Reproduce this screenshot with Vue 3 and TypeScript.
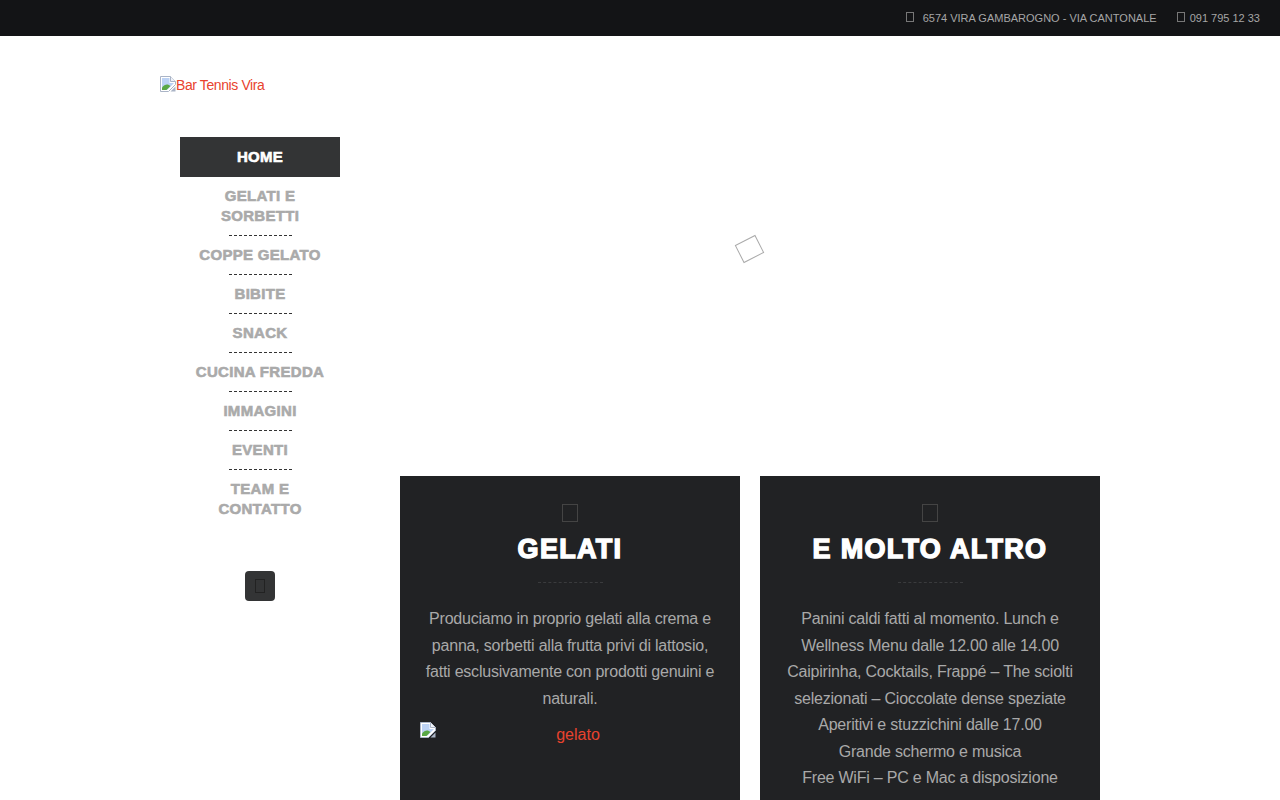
<template>
  <div class="page">
    <header class="topbar">
      <span class="top-item"><i class="tofu tofu-addr"></i>6574 VIRA GAMBAROGNO - VIA CANTONALE</span>
      <span class="top-item"><i class="tofu tofu-phone"></i>091 795 12 33</span>
    </header>

    <div class="layout">
      <aside class="sidebar">
        <a class="logo" href="#">
          <svg class="broken" viewBox="0 0 16 16" width="16" height="16">
            <path d="M.5 .5H10.5L15.5 5.5V8.5L8.5 15.5H.5Z" fill="#fff" stroke="#aab4c6" />
            <path d="M10.5 .5V5.5H15.5" fill="#eef2f8" stroke="#aab4c6" />
            <path d="M2 2H9.5V7H14L7.5 13.5H2Z" fill="#bcd2f4" />
            <path d="M2 14V11.5C4.5 8 8 7.5 10.5 10L6.5 14Z" fill="#5aa845" />
            <path d="M10.5 15.5L15.5 10.5V15.5Z" fill="#aab4c6" />
          </svg>Bar Tennis Vira
        </a>
        <nav class="nav">
          <a class="nav-home" href="#">HOME</a>
          <ul>
            <li v-for="item in menu" :key="item">
              <a href="#">{{ item }}</a>
            </li>
          </ul>
        </nav>
        <button class="to-top" type="button"><i class="tofu tofu-btn"></i></button>
      </aside>

      <main class="main">
        <div class="slider"><div class="loader"></div></div>
        <div class="cards">
          <section class="card">
            <i class="tofu tofu-card"></i>
            <h2>GELATI</h2>
            <div class="rule"></div>
            <p>
              Produciamo in proprio gelati alla crema e<br />
              panna, sorbetti alla frutta privi di lattosio,<br />
              fatti esclusivamente con prodotti genuini e<br />
              naturali.
            </p>
            <a class="card-img" href="#">
              <svg class="broken" viewBox="0 0 16 16" width="16" height="16">
                <path d="M.5 .5H10.5L15.5 5.5V8.5L8.5 15.5H.5Z" fill="#fff" stroke="#aab4c6" />
                <path d="M10.5 .5V5.5H15.5" fill="#eef2f8" stroke="#aab4c6" />
                <path d="M2 2H9.5V7H14L7.5 13.5H2Z" fill="#bcd2f4" />
                <path d="M2 14V11.5C4.5 8 8 7.5 10.5 10L6.5 14Z" fill="#5aa845" />
                <path d="M10.5 15.5L15.5 10.5V15.5Z" fill="#aab4c6" />
              </svg>
              <span>gelato</span>
            </a>
          </section>
          <section class="card">
            <i class="tofu tofu-card"></i>
            <h2>E MOLTO ALTRO</h2>
            <div class="rule"></div>
            <p>
              Panini caldi fatti al momento. Lunch e<br />
              Wellness Menu dalle 12.00 alle 14.00<br />
              Caipirinha, Cocktails, Frappé – The sciolti<br />
              selezionati – Cioccolate dense speziate<br />
              Aperitivi e stuzzichini dalle 17.00<br />
              Grande schermo e musica<br />
              Free WiFi – PC e Mac a disposizione
            </p>
          </section>
        </div>
      </main>
    </div>
  </div>
</template>

<script setup lang="ts">
const menu: string[] = [
  "GELATI E SORBETTI",
  "COPPE GELATO",
  "BIBITE",
  "SNACK",
  "CUCINA FREDDA",
  "IMMAGINI",
  "EVENTI",
  "TEAM E CONTATTO",
];
</script>

<style>
html,
body {
  margin: 0;
  background: #fff;
}
</style>

<style scoped>
.page {
  height: 800px;
  overflow: hidden;
  font-family: "Liberation Sans", Arial, sans-serif;
}

.topbar {
  height: 36px;
  background: #131416;
  display: flex;
  justify-content: flex-end;
  align-items: center;
  gap: 20px;
  padding-right: 20px;
  font-size: 11px;
  color: #a6a6a6;
}

.top-item {
  display: flex;
  align-items: center;
}

.tofu {
  display: block;
  box-sizing: border-box;
  border: 1px solid #666;
}

.tofu-addr,
.tofu-phone {
  width: 8px;
  height: 10px;
  margin-top: -2px;
  border-color: #777;
}

.tofu-addr {
  margin-right: 9px;
}

.tofu-phone {
  margin-right: 5px;
}

.layout {
  display: flex;
  padding-left: 160px;
}

.sidebar {
  width: 200px;
  padding-top: 40px;
  display: flex;
  flex-direction: column;
  align-items: flex-start;
}

.logo {
  display: flex;
  align-items: flex-start;
  height: 61px;
  font-size: 14px;
  letter-spacing: -0.4px;
  line-height: 19px;
  color: #e8432e;
  text-decoration: none;
}

.broken {
  flex: none;
}

.nav {
  width: 160px;
  margin-left: 20px;
  text-align: center;
  font-size: 15px;
  font-weight: 700;
  line-height: 20px;
  -webkit-text-stroke: 0.6px currentColor;
  letter-spacing: 0.3px;
}

.nav a {
  text-decoration: none;
  color: #aaa;
  display: block;
}

.nav .nav-home {
  height: 40px;
  line-height: 40px;
  background: #333435;
  color: #fff;
}

.nav ul {
  list-style: none;
  margin: 0;
  padding: 0 15px;
}

.nav li {
  padding-top: 9px;
}

.nav li:not(:last-child)::after {
  content: "";
  display: block;
  width: 63px;
  margin: 9px auto 0;
  border-top: 1px dashed #333;
  -webkit-text-stroke: 0;
}

.to-top {
  width: 30px;
  height: 30px;
  margin: 52px 0 0 85px;
  padding: 0;
  border: 0;
  border-radius: 4px;
  background: #333435;
  display: flex;
  align-items: center;
  justify-content: center;
}

.tofu-btn {
  width: 10px;
  height: 14px;
  border-color: #222;
}

.main {
  width: 700px;
  margin-left: 40px;
}

.slider {
  height: 426px;
  padding-bottom: 14px;
  display: flex;
  align-items: center;
  justify-content: center;
}

.loader {
  width: 23px;
  height: 20px;
  box-sizing: border-box;
  border: 1px solid #aaa;
  transform: translateX(-1px) rotate(-27deg);
}

.cards {
  display: grid;
  grid-template-columns: 340px 340px;
  gap: 20px;
}

.card {
  background: #212224;
  height: 420px;
  padding: 28px 20px 0;
  box-sizing: border-box;
  text-align: center;
  color: #a9a9a9;
}

.tofu-card {
  width: 16px;
  height: 18px;
  margin: 0 auto;
  border-color: #444;
}

.card h2 {
  margin: 9px 0 0;
  font-size: 27px;
  line-height: 36px;
  font-weight: 700;
  color: #fff;
  -webkit-text-stroke: 1.4px #fff;
  letter-spacing: 1.3px;
}

.rule {
  width: 65px;
  margin: 15px auto 0;
  border-top: 1px dashed #3a3b3d;
}

.card p {
  margin: 23px 0 0;
  font-size: 16px;
  letter-spacing: -0.22px;
  line-height: 26.5px;
}

.card-img {
  width: 300px;
  display: flex;
  margin-top: 10px;
  color: #e8432e;
  font-size: 16px;
  letter-spacing: 0;
  line-height: 26px;
  text-decoration: none;
}

.card-img span {
  flex: 1;
  text-align: center;
}
</style>
